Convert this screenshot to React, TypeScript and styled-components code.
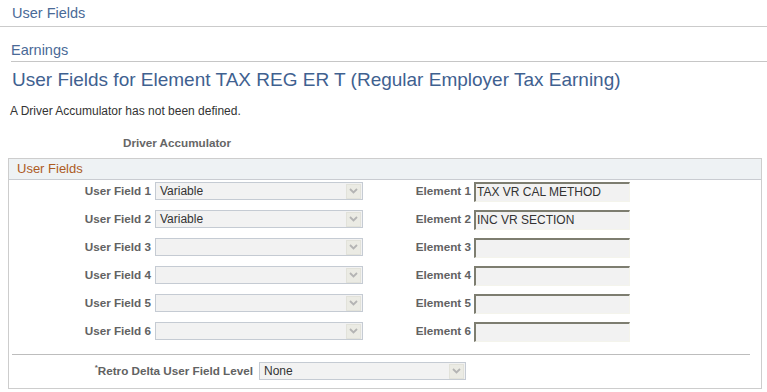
import React from "react";
import styled, { createGlobalStyle } from "styled-components";

type FieldRow = {
  id: number;
  userField: string;
  element: string;
};

const rows: FieldRow[] = [
  { id: 1, userField: "Variable", element: "TAX VR CAL METHOD" },
  { id: 2, userField: "Variable", element: "INC VR SECTION" },
  { id: 3, userField: "", element: "" },
  { id: 4, userField: "", element: "" },
  { id: 5, userField: "", element: "" },
  { id: 6, userField: "", element: "" },
];

const GlobalStyle = createGlobalStyle`
  body {
    margin: 0;
    background: #ffffff;
    font-family: "Liberation Sans", Arial, sans-serif;
  }
`;

const Page = styled.div`
  width: 767px;
  height: 392px;
  overflow: hidden;
  display: flex;
  flex-direction: column;
`;

const TopBar = styled.div`
  height: 26px;
  line-height: 26px;
  padding-left: 12px;
  font-size: 14.5px;
  color: #4a6a97;
  border-bottom: 1px solid #cbcbcb;
`;

const SubBar = styled.div`
  margin-left: 11px;
  padding-top: 13px;
  line-height: 21px;
  font-size: 14.5px;
  color: #4a6a97;
  border-bottom: 1px solid #c6c6c6;
`;

const Title = styled.h1`
  margin: 7px 0 0 12px;
  line-height: 22px;
  font-size: 19px;
  font-weight: normal;
  color: #3f6190;
  white-space: nowrap;
`;

const Message = styled.div`
  margin: 13px 0 0 10px;
  line-height: 14px;
  font-size: 12px;
  color: #333333;
`;

const FieldHeading = styled.div`
  margin: 18px 0 0 123px;
  line-height: 14px;
  font-size: 11.7px;
  font-weight: bold;
  color: #666666;
`;

const GroupBox = styled.section`
  margin: 8px 0 0 8px;
  width: 754px;
  box-sizing: border-box;
  border: 1px solid #cdcdcd;
  padding-bottom: 8px;
`;

const GroupHeader = styled.div`
  height: 20px;
  line-height: 20px;
  padding-left: 8px;
  font-size: 13px;
  color: #ad5b1e;
  background: #eef2f4;
  border-bottom: 1px solid #c9ccd1;
`;

const FieldGrid = styled.div`
  display: grid;
  grid-template-columns: 146px 208px 111px 156px;
  row-gap: 8px;
  padding-top: 2px;
  align-items: start;
`;

const Label = styled.label<{ $gap: number }>`
  text-align: right;
  padding-right: ${(p) => p.$gap}px;
  line-height: 18px;
  font-size: 11.7px;
  font-weight: bold;
  color: #626262;
  white-space: nowrap;
`;

const Req = styled.span`
  font-size: 8px;
  vertical-align: top;
  line-height: 12px;
`;

const SelectBox = styled.div`
  height: 18px;
  box-sizing: border-box;
  border: 1px solid #c5cbd3;
  background: #f2f2f2;
  display: flex;
  align-items: center;
  justify-content: space-between;
  padding-left: 4px;
  font-size: 12px;
  color: #333333;
`;

const ArrowButton = styled.span`
  width: 15px;
  height: 15px;
  margin-right: 1px;
  box-sizing: border-box;
  border: 1px solid #e2e2da;
  background: #ebebe4;
  display: flex;
  align-items: center;
  justify-content: center;
`;

const TextInput = styled.div`
  height: 20px;
  box-sizing: border-box;
  border-top: 2px solid #7d7d70;
  border-left: 2px solid #7d7d70;
  border-right: 1px solid #f4f4ec;
  border-bottom: 1px solid #f4f4ec;
  background: #f2f2f2;
  padding-left: 1px;
  line-height: 17px;
  font-size: 12px;
  color: #333333;
  white-space: nowrap;
`;

const Divider = styled.hr`
  margin: 12px 0 0 3px;
  width: 738px;
  height: 0;
  border: none;
  border-top: 1px solid #bdbdbd;
`;

const RetroRow = styled.div`
  display: grid;
  grid-template-columns: 250px 207px;
  margin-top: 7px;
`;

const Chevron = () => (
  <svg width="9" height="6" viewBox="0 0 9 6">
    <path d="M1 1 L4.5 4.5 L8 1" fill="none" stroke="#b4b4b4" strokeWidth="1.8" />
  </svg>
);

const Select: React.FC<{ value: string }> = ({ value }) => (
  <SelectBox>
    <span>{value}</span>
    <ArrowButton>
      <Chevron />
    </ArrowButton>
  </SelectBox>
);

const App: React.FC = () => {
  return (
    <Page>
      <GlobalStyle />
      <TopBar>User Fields</TopBar>
      <SubBar>Earnings</SubBar>
      <Title>User Fields for Element TAX REG ER T (Regular Employer Tax Earning)</Title>
      <Message>A Driver Accumulator has not been defined.</Message>
      <FieldHeading>Driver Accumulator</FieldHeading>
      <GroupBox>
        <GroupHeader>User Fields</GroupHeader>
        <FieldGrid>
          {rows.map((row) => (
            <React.Fragment key={row.id}>
              <Label $gap={4}>User Field {row.id}</Label>
              <Select value={row.userField} />
              <Label $gap={3}>Element {row.id}</Label>
              <TextInput>{row.element}</TextInput>
            </React.Fragment>
          ))}
        </FieldGrid>
        <Divider />
        <RetroRow>
          <Label $gap={6}>
            <Req>*</Req>Retro Delta User Field Level
          </Label>
          <Select value="None" />
        </RetroRow>
      </GroupBox>
    </Page>
  );
};

export default App;
